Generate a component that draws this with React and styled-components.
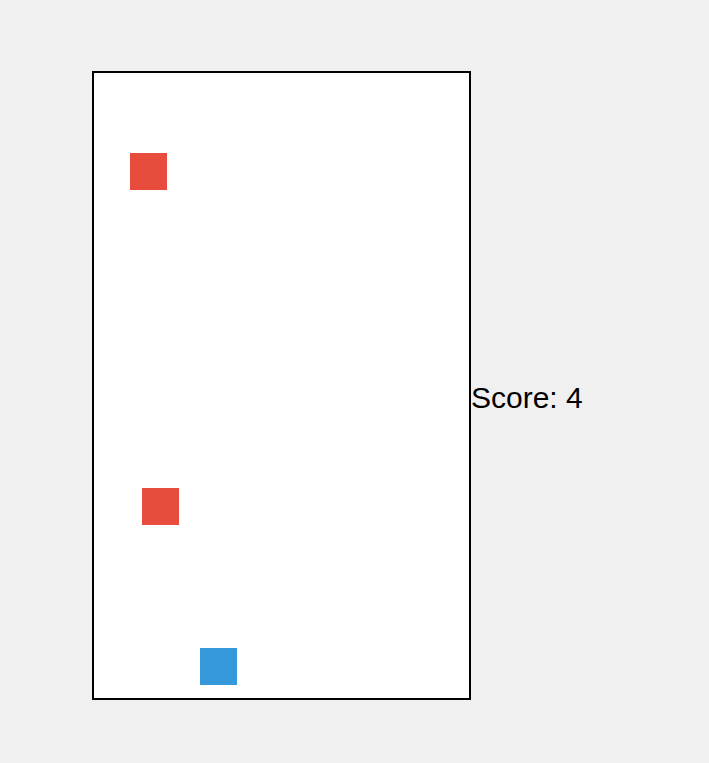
import styled, {createGlobalStyle} from 'styled-components'

const GlobalStyle = createGlobalStyle`
html, body {
margin: 0;
padding: 0;
background: #f0f0f0;
font-family: "Liberation Sans", Arial, sans-serif;
}
`

const obstacles = [
    {id: 1, x: 36, y: 80},
    {id: 2, x: 48, y: 415},
]

const player = {x: 106, y: 575}

function App(){
    return(
        <>
          <GlobalStyle/>
          <Page>
              <Board>
                  {obstacles.map(o => (
                      <Block key={o.id} $color='#e74c3c' style={{left: o.x, top: o.y}}/>
                  ))}
                  <Block $color='#3498db' style={{left: player.x, top: player.y}}/>
              </Board>
              <Score>Score: 4</Score>
          </Page>
        </>
    )
}

export default App

const Page = styled.div`
display: flex;
align-items: flex-start;
padding: 71px 0 0 92px;
min-height: 100vh;
box-sizing: border-box;
`
const Board = styled.div`
position: relative;
width: 375px;
height: 625px;
border: 2px solid #000;
background: #fff;
flex-shrink: 0;
`
const Block = styled.div`
position: absolute;
width: 37px;
height: 37px;
background: ${props => props.$color};
`
const Score = styled.div`
margin-top: 310px;
font-size: 30px;
color: #000;
`
